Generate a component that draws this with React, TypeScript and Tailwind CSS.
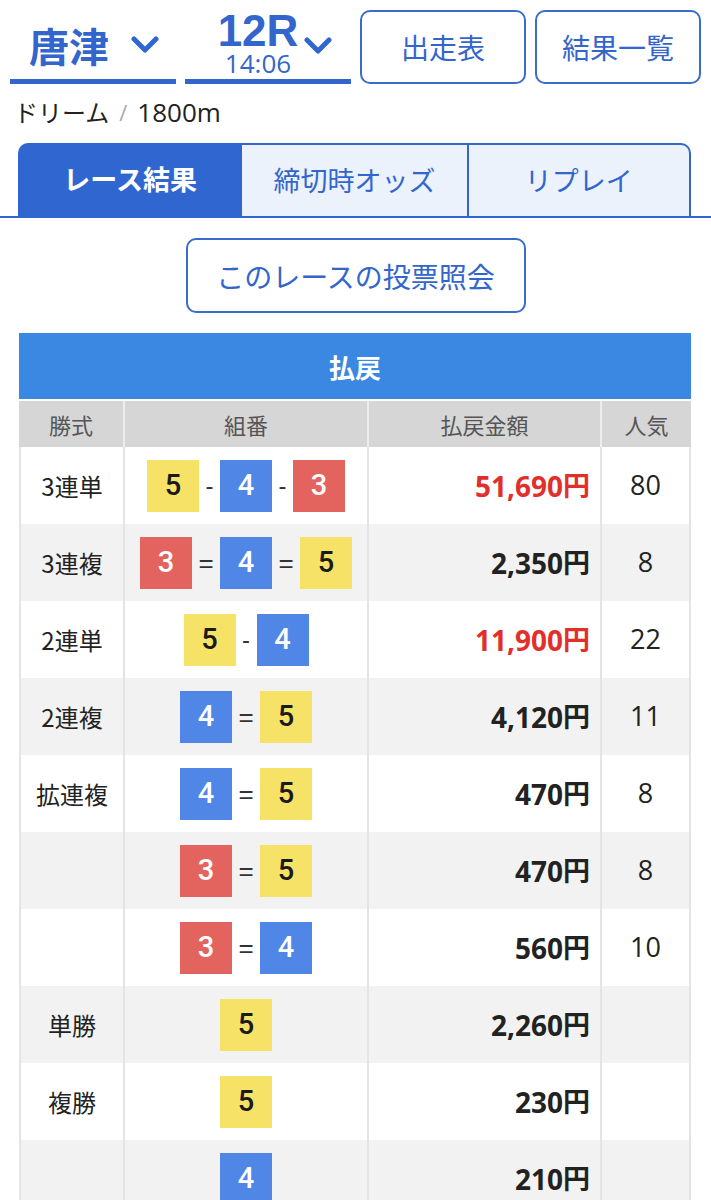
import React from "react";

const BLUE = "#2f66d0";

type Num = 3 | 4 | 5;

const boxColor: Record<Num, string> = {
  3: "bg-[#e3645f] text-white",
  4: "bg-[#5086e6] text-white",
  5: "bg-[#f6e266] text-[#1a1a1a]",
};

function Box({ n }: { n: Num }) {
  return (
    <div
      className={`w-[52px] h-[52px] flex items-center justify-center font-['Roboto'] font-medium text-[29px] leading-none ${boxColor[n]}`}
    >
      {n}
    </div>
  );
}

function Chevron() {
  return (
    <svg width="28" height="18" viewBox="0 0 28 18" className="shrink-0">
      <polyline
        points="3,3 14,14 25,3"
        fill="none"
        stroke={BLUE}
        strokeWidth="5"
        strokeLinecap="round"
        strokeLinejoin="round"
      />
    </svg>
  );
}

type Row = {
  kind: string;
  combo: Num[];
  sep: "-" | "=" | "";
  amount: string;
  red?: boolean;
  pop: string;
};

const rows: Row[] = [
  { kind: "3連単", combo: [5, 4, 3], sep: "-", amount: "51,690", red: true, pop: "80" },
  { kind: "3連複", combo: [3, 4, 5], sep: "=", amount: "2,350", pop: "8" },
  { kind: "2連単", combo: [5, 4], sep: "-", amount: "11,900", red: true, pop: "22" },
  { kind: "2連複", combo: [4, 5], sep: "=", amount: "4,120", pop: "11" },
  { kind: "拡連複", combo: [4, 5], sep: "=", amount: "470", pop: "8" },
  { kind: "", combo: [3, 5], sep: "=", amount: "470", pop: "8" },
  { kind: "", combo: [3, 4], sep: "=", amount: "560", pop: "10" },
  { kind: "単勝", combo: [5], sep: "", amount: "2,260", pop: "" },
  { kind: "複勝", combo: [5], sep: "", amount: "230", pop: "" },
  { kind: "", combo: [4], sep: "", amount: "210", pop: "" },
];

function Combo({ combo, sep }: { combo: Num[]; sep: string }) {
  return (
    <div className="flex items-center justify-center">
      {combo.map((n, i) => (
        <React.Fragment key={i}>
          {i > 0 && (
            <span
              className={`text-[#333] leading-none font-['Liberation_Sans'] text-center ${
                sep === "=" ? "w-[28px] text-[26px]" : "w-[21px] text-[24px]"
              }`}
            >
              {sep}
            </span>
          )}
          <Box n={n} />
        </React.Fragment>
      ))}
    </div>
  );
}

export default function App() {
  return (
    <div className="w-[711px] min-h-[1200px] bg-white font-['Noto_Sans_CJK_JP',sans-serif] text-[#222] overflow-hidden">
      {/* Header */}
      <div className="grid grid-cols-4 gap-[9px] px-[10px] pt-[10px]">
        <div className="h-[74px] flex flex-col">
          <div className="flex-1 flex items-center justify-center gap-[22px] pl-[2px]">
            <span className="text-[40px] font-bold leading-none text-[#3366cc]">唐津</span>
            <Chevron />
          </div>
          <div className="h-[5px] bg-[#3366cc]" />
        </div>
        <div className="h-[74px] flex flex-col">
          <div className="flex-1 flex items-start justify-center gap-[6px] pl-[14px]">
            <div className="flex flex-col items-center pt-[2px]">
              <span className="font-['Liberation_Sans'] font-bold text-[44px] leading-[38px] text-[#3366cc]">12R</span>
              <span className="font-['Open_Sans'] text-[26px] leading-[24px] text-[#3366cc] mt-[1px]">14:06</span>
            </div>
            <div className="pt-[27px]">
              <Chevron />
            </div>
          </div>
          <div className="h-[5px] bg-[#3366cc]" />
        </div>
        <div className="h-[74px] border-2 border-[#3a6cc9] rounded-[10px] flex items-center justify-center text-[28px] text-[#3366cc]">
          出走表
        </div>
        <div className="h-[74px] border-2 border-[#3a6cc9] rounded-[10px] flex items-center justify-center text-[28px] text-[#3366cc]">
          結果一覧
        </div>
      </div>

      {/* Subtitle */}
      <div className="mt-[12px] h-[32px] pl-[14px] flex items-center text-[24px] text-[#222]">
        <span>ドリーム</span>
        <span className="text-[#aaa] mx-[10px] font-['Open_Sans'] text-[22px]">/</span>
        <span className="font-['Open_Sans'] text-[26px]">1800m</span>
      </div>

      {/* Tabs */}
      <div className="mt-[15px] border-b-2 border-[#3366cc] pl-[18px] pr-[20px]">
        <div className="grid grid-cols-3 h-[73px]">
          <div className="bg-[#2f66d0] rounded-tl-[10px] flex items-center justify-center text-white font-bold text-[27px]">
            レース結果
          </div>
          <div className="bg-[#ebf2fc] border-t-2 border-[#3366cc] flex items-center justify-center text-[#3366cc] text-[27px]">
            締切時オッズ
          </div>
          <div className="bg-[#ebf2fc] border-t-2 border-l-2 border-r-2 border-[#3366cc] rounded-tr-[10px] flex items-center justify-center text-[#3366cc] text-[27px]">
            リプレイ
          </div>
        </div>
      </div>

      {/* Vote button */}
      <div className="flex justify-center mt-[20px]">
        <div className="w-[340px] h-[75px] border-2 border-[#3a6cc9] rounded-[10px] flex items-center justify-center text-[28px] text-[#3366cc]">
          このレースの投票照会
        </div>
      </div>

      {/* Table */}
      <div className="mt-[20px] ml-[19px] w-[672px]">
        <div className="h-[66px] bg-[#3b88e2] flex items-center justify-center text-white font-bold text-[26px]">
          払戻
        </div>
        <div className="mt-[2px] grid grid-cols-[104px_244px_233px_91px] h-[46px] bg-[#d6d6d6] text-[#555] text-[22px]">
          <div className="flex items-center justify-center">勝式</div>
          <div className="flex items-center justify-center border-l-2 border-[#ededed]">組番</div>
          <div className="flex items-center justify-center border-l-2 border-[#ededed]">払戻金額</div>
          <div className="flex items-center justify-center border-l-2 border-[#ededed]">人気</div>
        </div>
        {rows.map((r, i) => (
          <div
            key={i}
            className={`grid grid-cols-[104px_244px_233px_91px] h-[77px] ${
              i % 2 === 0 ? "bg-white" : "bg-[#f2f2f2]"
            }`}
          >
            <div className="flex items-center justify-center border-l-2 border-[#e4e4e4] text-[24px] text-[#222]">
              {r.kind}
            </div>
            <div className="flex items-center justify-center border-l-2 border-[#e4e4e4]">
              <Combo combo={r.combo} sep={r.sep} />
            </div>
            <div
              className={`flex items-center justify-end pr-[10px] border-l-2 border-[#e4e4e4] font-bold ${
                r.red ? "text-[#e1302b]" : "text-[#222]"
              }`}
            >
              <span className="font-['Open_Sans'] text-[28px]">{r.amount}</span>
              <span className="text-[27px]">円</span>
            </div>
            <div className="flex items-center justify-center border-l-2 border-r-2 border-[#e4e4e4] font-['Open_Sans'] text-[27px] text-[#222]">
              {r.pop}
            </div>
          </div>
        ))}
      </div>
    </div>
  );
}
